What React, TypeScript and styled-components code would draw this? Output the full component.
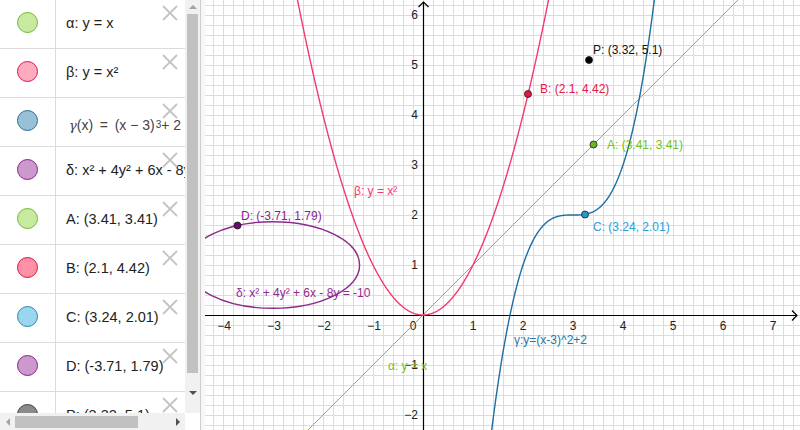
import React from 'react';
import styled, { createGlobalStyle } from 'styled-components';

const GlobalStyle = createGlobalStyle`
  html, body {
    margin: 0;
    padding: 0;
    background: #ffffff;
    overflow: hidden;
  }
  body {
    font-family: "Liberation Sans", Arial, sans-serif;
  }
`;

type Marble = { fill: string, stroke: string };

type Item = {
  id: string,
  marble: Marble,
  label: React.ReactNode,
  math?: boolean,
};

const GREEN = { fill: '#c7eaa0', stroke: '#6fba2c' };
const PINK = { fill: '#ffabbf', stroke: '#d9174c' };
const STEEL = { fill: '#98c0d6', stroke: '#236f9e' };
const PURPLE = { fill: '#cc99cc', stroke: '#8a1f8a' };
const RED = { fill: '#ff90a7', stroke: '#d41540' };
const SKY = { fill: '#9ad7ef', stroke: '#2a86b3' };
const GREY = { fill: '#8a8a8a', stroke: '#3c3c3c' };

const items: Item[] = [
  { id: 'a', marble: GREEN, label: 'α: y = x' },
  { id: 'b', marble: PINK, label: 'β: y = x²' },
  {
    id: 'g',
    marble: STEEL,
    math: true,
    label: (
      <>
        <i>γ</i>(x)&thinsp; = &thinsp;(x − 3)<sup>3</sup> + 2
      </>
    ),
  },
  { id: 'd', marble: PURPLE, label: 'δ: x² + 4y² + 6x - 8y = -10' },
  { id: 'A', marble: GREEN, label: 'A: (3.41, 3.41)' },
  { id: 'B', marble: RED, label: 'B: (2.1, 4.42)' },
  { id: 'C', marble: SKY, label: 'C: (3.24, 2.01)' },
  { id: 'D', marble: PURPLE, label: 'D: (-3.71, 1.79)' },
  { id: 'P', marble: GREY, label: 'P: (3.32, 5.1)' },
];

const Page = styled.div`
  display: flex;
  width: 800px;
  height: 430px;
  overflow: hidden;
  background: #ffffff;
`;

const Sidebar = styled.aside`
  width: 200px;
  flex: none;
  display: flex;
  flex-direction: column;
`;

const SidebarBody = styled.div`
  height: 413px;
  display: flex;
`;

const SidebarFooter = styled.div`
  height: 17px;
  display: flex;
`;

const List = styled.ul`
  width: 185px;
  margin: 0;
  padding: 0;
  list-style: none;
  overflow: hidden;
`;

const Row = styled.li`
  position: relative;
  display: flex;
  height: 48px;
  border-bottom: 1px solid #dcdcdc;
  white-space: nowrap;
`;

const MarbleCell = styled.div`
  width: 56px;
  flex: none;
  border-right: 1px solid #dcdcdc;
  display: flex;
  align-items: center;
  justify-content: center;
  padding-bottom: 4px;
  box-sizing: border-box;
`;

const Dot = styled.span<{ $fill: string, $stroke: string }>`
  width: 19px;
  height: 19px;
  border-radius: 50%;
  background: ${(p) => p.$fill};
  border: 1px solid ${(p) => p.$stroke};
`;

const TextCell = styled.div<{ $math?: boolean }>`
  display: flex;
  align-items: center;
  padding-left: ${(p) => (p.$math ? '13px' : '10px')};
  padding-top: ${(p) => (p.$math ? '6px' : '0')};
  padding-bottom: ${(p) => (p.$math ? '0' : '3px')};
  font-size: ${(p) => (p.$math ? '14px' : '14.5px')};
  color: ${(p) => (p.$math ? '#444' : '#222')};

  sup {
    font-size: 10px;
    vertical-align: 7px;
    line-height: 0;
    margin-left: 1px;
  }
  i {
    font-family: "DejaVu Serif", serif;
    font-size: 13px;
  }
`;

const DeleteButton = styled.button`
  position: absolute;
  top: 5px;
  right: 7px;
  width: 16px;
  height: 16px;
  padding: 0;
  border: none;
  background: transparent;
  display: flex;

  svg {
    display: block;
  }
`;

const VScroll = styled.div`
  width: 15px;
  flex: none;
  background: #f1f1f1;
  display: flex;
  flex-direction: column;
  align-items: center;
`;

const HScroll = styled.div`
  width: 185px;
  background: #f1f1f1;
  display: flex;
  align-items: center;
`;

const Corner = styled.div`
  width: 15px;
  background: #ffffff;
`;

const ArrowBox = styled.div<{ $size: number }>`
  width: ${(p) => p.$size}px;
  height: ${(p) => p.$size}px;
  flex: none;
  display: flex;
  align-items: center;
  justify-content: center;
`;

const VThumb = styled.div`
  width: 11px;
  height: 359px;
  background: #c1c1c1;
`;

const VGap = styled.div`
  flex: 1;
`;

const HThumb = styled.div`
  width: 123px;
  height: 12px;
  background: #c1c1c1;
`;

const Divider = styled.div`
  width: 4px;
  flex: none;
  border-left: 1px solid #cfcfcf;
  background: #f7f7f7;
`;

const Graphics = styled.main`
  flex: 1;
  position: relative;
  overflow: hidden;
  background: #ffffff;

  svg {
    display: block;
  }
`;

const Tri = ({ dir, color }: { dir: 'up' | 'down' | 'left' | 'right', color: string }) => {
  const pts = {
    up: '0,4 4,0 8,4',
    down: '0,0 8,0 4,4',
    left: '4,0 4,8 0,4',
    right: '0,0 0,8 4,4',
  }[dir];
  const w = dir === 'up' || dir === 'down' ? 8 : 4;
  const h = dir === 'up' || dir === 'down' ? 4 : 8;
  return (
    <svg width={w} height={h} viewBox={`0 0 ${w} ${h}`}>
      <polygon points={pts} fill={color} />
    </svg>
  );
};

// graph view geometry (svg coords, graphics panel starts at page x=205)
const W = 595;
const H = 430;
const OX = 218;
const OY = 315;
const U = 50;
const sx = (x: number) => OX + U * x;
const sy = (y: number) => OY - U * y;

const plot = (f: (x: number) => number, from: number, to: number) => {
  const parts: string[] = [];
  for (let x = from; x <= to + 1e-9; x += 0.01) {
    parts.push(`${parts.length ? 'L' : 'M'}${sx(x).toFixed(2)},${sy(f(x)).toFixed(2)}`);
  }
  return parts.join(' ');
};

const C_LINE = '#7cc12e';
const C_PARA = '#f23a6c';
const C_CUBIC = '#1f6ea3';
const C_ELL = '#8e2a8e';

const GraphView = () => {
  const vLines: number[] = [];
  for (let x = OX % 10; x <= W; x += 10) vLines.push(x);
  const hLines: number[] = [];
  for (let y = OY % 10; y <= H; y += 10) hLines.push(y);

  const xTicks = [-4, -3, -2, -1, 1, 2, 3, 4, 5, 6, 7];
  const yTicks = [-2, -1, 1, 2, 3, 4, 5, 6];
  const fmt = (n: number) => (n < 0 ? `−${-n}` : `${n}`);

  return (
    <svg width={W} height={H} viewBox={`0 0 ${W} ${H}`} fontFamily='"Liberation Sans", Arial, sans-serif'>
      <g stroke="#dcdcdc" strokeWidth={1}>
        {vLines.map((x) => (
          <line key={`v${x}`} x1={x + 0.5} y1={0} x2={x + 0.5} y2={H} />
        ))}
        {hLines.map((y) => (
          <line key={`h${y}`} x1={0} y1={y + 0.5} x2={W} y2={y + 0.5} />
        ))}
      </g>

      <g stroke="#000" strokeWidth={1.2} fill="none">
        <line x1={0} y1={OY + 0.5} x2={W - 3} y2={OY + 0.5} />
        <polyline points={`${W - 8},${OY - 4.5} ${W - 3},${OY + 0.5} ${W - 8},${OY + 5.5}`} />
        <line x1={OX + 0.5} y1={H} x2={OX + 0.5} y2={2} />
        <polyline points={`${OX - 4.5},7 ${OX + 0.5},2 ${OX + 5.5},7`} />
      </g>

      <g fontSize={12} fill="#222">
        {xTicks.map((t) => (
          <text key={`x${t}`} x={sx(t) + (t < 0 ? 1 : 0)} y={OY + 15} textAnchor="middle">
            {fmt(t)}
          </text>
        ))}
        <text x={OX - 10} y={OY + 15} textAnchor="middle">0</text>
        {yTicks.map((t) => (
          <text key={`y${t}`} x={OX - 5} y={sy(t) + 4} textAnchor="end">
            {fmt(t)}
          </text>
        ))}
      </g>

      <line x1={sx(-5)} y1={sy(-5)} x2={sx(8)} y2={sy(8)} stroke={C_LINE} strokeWidth={1} />
      <path d={plot((x) => x * x, -2.6, 2.6)} stroke={C_PARA} strokeWidth={1.4} fill="none" />
      <path d={plot((x) => (x - 3) ** 3 + 2, 1.3, 4.7)} stroke={C_CUBIC} strokeWidth={1.4} fill="none" />
      <ellipse cx={sx(-3)} cy={sy(1)} rx={U * Math.sqrt(3)} ry={(U * Math.sqrt(3)) / 2} stroke={C_ELL} strokeWidth={1.4} fill="none" />

      <g stroke="#1a1a1a" strokeWidth={0.8}>
        <circle cx={sx(-3.71)} cy={sy(1.79)} r={3.5} fill="#6a0a6a" />
        <circle cx={sx(3.41)} cy={sy(3.41)} r={3.5} fill="#6cb52a" />
        <circle cx={sx(2.1)} cy={sy(4.42)} r={3.5} fill="#e5173f" />
        <circle cx={sx(3.24)} cy={sy(2.01)} r={3.5} fill="#2799cc" />
        <circle cx={sx(3.32)} cy={sy(5.1)} r={3.5} fill="#000" />
      </g>

      <g fontSize={12}>
        <text x={388} y={54} fill="#111">P: (3.32, 5.1)</text>
        <text x={335} y={93} fill="#e8174a">B: (2.1, 4.42)</text>
        <text x={402} y={149} fill="#74bf22">A: (3.41, 3.41)</text>
        <text x={388} y={231} fill="#2aa0d6">C: (3.24, 2.01)</text>
        <text x={36} y={220} fill="#8a1f8a">D: (-3.71, 1.79)</text>
        <text x={149} y={195} fill="#f2386b">β: y = x²</text>
        <text x={31} y={297} fill="#8e2a8e">δ: x² + 4y² + 6x - 8y = -10</text>
        <text x={183} y={370} fill="#74bf22">α: y = x</text>
        <text x={309} y={344} fill="#2277aa">γ:y=(x-3)^2+2</text>
      </g>
    </svg>
  );
};

const App = () => (
  <>
    <GlobalStyle />
    <Page>
      <Sidebar>
        <SidebarBody>
          <List>
            {items.map((it) => (
              <Row key={it.id}>
                <MarbleCell>
                  <Dot $fill={it.marble.fill} $stroke={it.marble.stroke} />
                </MarbleCell>
                <TextCell $math={it.math}>{it.label}</TextCell>
                <DeleteButton aria-label="Delete">
                  <svg width={16} height={16} viewBox="0 0 16 16">
                    <path d="M1 1 L15 15 M15 1 L1 15" stroke="#c4c4c4" strokeWidth={1.8} />
                  </svg>
                </DeleteButton>
              </Row>
            ))}
          </List>
          <VScroll>
            <ArrowBox $size={14}>
              <Tri dir="up" color="#a3a3a3" />
            </ArrowBox>
            <VThumb />
            <VGap />
            <ArrowBox $size={14}>
              <Tri dir="down" color="#505050" />
            </ArrowBox>
            <VGap />
          </VScroll>
        </SidebarBody>
        <SidebarFooter>
          <HScroll>
            <ArrowBox $size={15}>
              <Tri dir="left" color="#a3a3a3" />
            </ArrowBox>
            <HThumb />
            <VGap />
            <ArrowBox $size={15}>
              <Tri dir="right" color="#505050" />
            </ArrowBox>
          </HScroll>
          <Corner />
        </SidebarFooter>
      </Sidebar>
      <Divider />
      <Graphics>
        <GraphView />
      </Graphics>
    </Page>
  </>
);

export default App;
